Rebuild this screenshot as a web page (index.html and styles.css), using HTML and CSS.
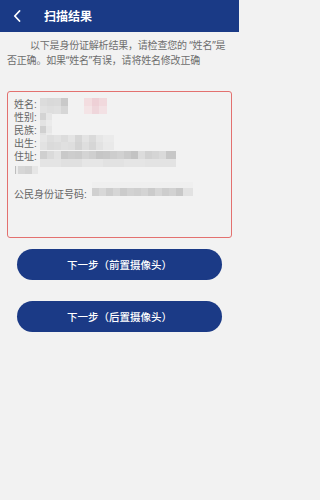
FILE: index.html
```html
<!DOCTYPE html>
<html lang="zh-CN">
<head>
<meta charset="utf-8">
<title>扫描结果</title>
<link rel="stylesheet" href="styles.css">
</head>
<body>
<div class="page">
<header class="topbar">
  <span class="back"><svg width="8" height="12" viewBox="0 0 8 12"><path d="M6.5 1 L1.8 6 L6.5 11" fill="none" stroke="#fff" stroke-width="1.8" stroke-linecap="round" stroke-linejoin="round"/></svg></span>
  <h1 class="title">扫描结果</h1>
</header>
<p class="intro">以下是身份证解析结果，请检查您的 “姓名”是否正确。如果“姓名”有误，请将姓名修改正确</p>
<section class="card">
  <div class="row"><span class="lbl">姓名:</span><span class="blur b-name"></span><span class="blur b-pink"></span></div>
  <div class="row"><span class="lbl">性别:</span><span class="blur b-sex"></span></div>
  <div class="row"><span class="lbl">民族:</span><span class="blur b-eth"></span></div>
  <div class="row"><span class="lbl">出生:</span><span class="blur b-birth"></span></div>
  <div class="row"><span class="lbl">住址:</span><span class="blur b-addr"></span></div>
  <div class="row"><span class="blur b-addr2"></span></div>
  <div class="row id-row"><span class="lbl">公民身份证号码:</span><span class="blur b-id"></span></div>
</section>
<div class="actions">
  <button class="btn">下一步（前置摄像头）</button>
  <button class="btn">下一步（后置摄像头）</button>
</div>
</div>
</body>
</html>
```
FILE: styles.css
```css
html, body {
  margin: 0;
  padding: 0;
  background: #f2f2f2;
  font-family: "Noto Sans CJK SC", "Noto Sans", sans-serif;
}
.page {
  width: 239px;
  min-height: 500px;
}
.topbar {
  height: 32px;
  background: #1a3a86;
  display: flex;
  align-items: center;
}
.back {
  display: flex;
  width: 8px;
  height: 12px;
  margin-left: 13px;
}
.title {
  margin: 0 0 0 23px;
  color: #fff;
  font-size: 12px;
  font-weight: 700;
  line-height: 32px;
}
.intro {
  margin: 0;
  padding: 6px 7px 0 7px;
  font-family: "Noto Sans", "Noto Sans CJK SC", sans-serif;
  font-size: 10px;
  line-height: 15px;
  color: #6e6e6e;
  text-indent: 23px;
  letter-spacing: -0.2px;
}
.card {
  box-sizing: border-box;
  height: 147px;
  margin: 23px 7px 0 7px;
  border: 1px solid #e3716f;
  border-radius: 3px;
  padding: 6px 6px 0 6px;
}
.row {
  display: flex;
  align-items: flex-start;
  height: 13px;
  line-height: 13px;
  font-family: "Liberation Sans", "Noto Sans CJK SC", sans-serif;
  font-size: 10px;
  color: #666;
}
.lbl { flex: none; }
.id-row { margin-top: 12px; }
.blur { flex: none; display: block; }
.b-name {
  width: 28px; height: 16px; margin: 0 0 0 3px;
  background:
    linear-gradient(90deg, #dcdcdc 0 7px, #d9d9d9 7px 14px, #dadada 14px 21px, #c9c9c9 21px 28px) top / 100% 8px no-repeat,
    linear-gradient(90deg, #e1e1e1 0 7px, #dedede 7px 14px, #e0e0e0 14px 21px, #d6d6d6 21px 28px) bottom / 100% 8px no-repeat;
}
.b-pink {
  width: 23px; height: 16px; margin-left: 16px;
  background:
    linear-gradient(90deg, #f3dde0 0 8px, #eed0d6 8px 15px, #f1d9dd 15px 23px) top / 100% 8px no-repeat,
    linear-gradient(90deg, #f4e4e6 0 8px, #efd6db 8px 15px, #f3e1e4 15px 23px) bottom / 100% 8px no-repeat;
}
.b-sex {
  width: 12px; height: 13px; margin: 2px 0 0 3px;
  background:
    linear-gradient(90deg, #d3d3d3 0 6px, #e6e6e6 6px 12px) top / 100% 7px no-repeat,
    linear-gradient(90deg, #e3e3e3 0 6px, #ebebeb 6px 12px) bottom / 100% 6px no-repeat;
}
.b-eth {
  width: 12px; height: 13px; margin: 2px 0 0 3px;
  background:
    linear-gradient(90deg, #d0d0d0 0 6px, #e7e7e7 6px 12px) top / 100% 7px no-repeat,
    linear-gradient(90deg, #e2e2e2 0 6px, #ececec 6px 12px) bottom / 100% 6px no-repeat;
}
.b-birth {
  width: 74px; height: 15px; margin: -2px 0 0 3px;
  background:
    linear-gradient(90deg, #e6e6e6 0 7px, #dedede 7px 14px, #e2e2e2 14px 21px, #dcdcdc 21px 28px, #e4e4e4 28px 35px, #d6d6d6 35px 42px, #e3e3e3 42px 49px, #dadada 49px 56px, #e6e6e6 56px 63px, #ebebeb 63px 74px) top / 100% 7px no-repeat,
    linear-gradient(90deg, #e2e2e2 0 7px, #dadada 7px 14px, #dcdcdc 14px 21px, #e0e0e0 21px 28px, #dedede 28px 35px, #d3d3d3 35px 42px, #dedede 42px 49px, #d6d6d6 49px 56px, #e2e2e2 56px 63px, #e9e9e9 63px 74px) bottom / 100% 8px no-repeat;
}
.b-addr {
  width: 136px; height: 16px; margin: 1px 0 0 3px;
  background:
    linear-gradient(90deg, #cfcfcf 0 7px, #dadada 7px 14px, #e2e2e2 14px 21px, #c9c9c9 21px 28px, #cdcdcd 28px 35px, #cbcbcb 35px 42px, #d4d4d4 42px 49px, #cfcfcf 49px 56px, #c6c6c6 56px 63px, #c8c8c8 63px 70px, #cdcdcd 70px 77px, #d1d1d1 77px 84px, #cacaca 84px 91px, #c3c3c3 91px 98px, #dcdcdc 98px 105px, #d1d1d1 105px 112px, #d5d5d5 112px 119px, #dadada 119px 126px, #c7c7c7 126px 136px) top / 100% 8px no-repeat,
    linear-gradient(90deg, #e4e4e4 0 21px, #e0e0e0 21px 42px, #e6e6e6 42px 63px, #e2e2e2 63px 84px, #e5e5e5 84px 105px, #e3e3e3 105px 136px) bottom / 100% 8px no-repeat;
}
.b-addr2 {
  width: 23px; height: 8px; margin: 3px 0 0 1px;
  background: linear-gradient(90deg, #bdbdbd 0 1px, #ececec 1px 3px, #d6d6d6 3px 10px, #d2d2d2 10px 17px, #e6e6e6 17px 23px);
}
.b-id {
  width: 101px; height: 14px; margin: -6px 0 0 5px;
  background:
    linear-gradient(90deg, #efefef 0 101px) top / 100% 6px no-repeat,
    linear-gradient(90deg, #d0d0d0 0 7px, #d8d8d8 7px 14px, #cdcdcd 14px 21px, #d6d6d6 21px 28px, #cbcbcb 28px 35px, #d2d2d2 35px 42px, #cfcfcf 42px 49px, #d4d4d4 49px 56px, #cbcbcb 56px 63px, #d6d6d6 63px 70px, #cdcdcd 70px 77px, #d2d2d2 77px 84px, #c8c8c8 84px 91px, #e2e2e2 91px 101px) bottom / 100% 8px no-repeat;
}
.actions {
  display: flex;
  flex-direction: column;
  gap: 21px;
  padding: 11px 17px 0 17px;
}
.btn {
  height: 31px;
  border: none;
  border-radius: 16px;
  background: #1b3a86;
  color: #fff;
  font-family: "Noto Sans CJK SC", "Noto Sans", sans-serif;
  font-size: 10.5px;
  font-weight: 500;
  padding: 0;
}
```
